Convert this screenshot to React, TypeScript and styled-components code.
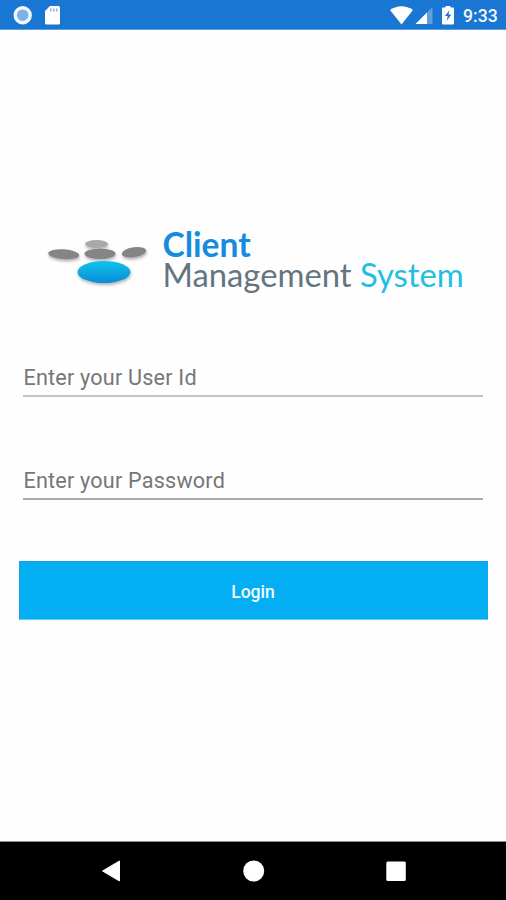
import React, { useState } from "react";
import styled, { createGlobalStyle } from "styled-components";

const GlobalStyle = createGlobalStyle`
  *, *::before, *::after { box-sizing: border-box; }
  body { margin: 0; background: #fefefe; font-family: Roboto, "Liberation Sans", sans-serif; }
`;

const Screen = styled.div`
  display: flex;
  flex-direction: column;
  width: 100%;
  height: 100vh;
  min-height: 640px;
  overflow: hidden;
  background: #fefefe;
`;

const StatusBar = styled.header`
  display: flex;
  align-items: center;
  justify-content: space-between;
  flex: none;
  height: 30px;
  background: #1976d2;
  border-bottom: 1px solid #5c9fe0;
`;

const StatusGroup = styled.div`
  display: flex;
  align-items: center;
`;

const Clock = styled.time`
  width: 34px;
  margin: 3px 9px 0 0;
  color: #f4f9ff;
  font-size: 17.6px;
  font-weight: 500;
  line-height: 22px;
  white-space: nowrap;
`;

const Icon = styled.svg`
  display: block;
  flex: none;
`;

const Content = styled.main`
  display: flex;
  flex-direction: column;
  flex: 1;
  padding: 198px 18px 0 19px;
`;

const Brand = styled.div`
  display: flex;
  height: 76px;
  padding-left: 23px;
`;

const BrandName = styled.h1`
  margin: 0 0 0 10.5px;
  padding-top: 1px;
  font-family: Lato, "Liberation Sans", sans-serif;
  font-weight: 400;
  white-space: nowrap;
`;

const BrandLine = styled.span<{ $color: string; $size: string; $weight?: number }>`
  display: block;
  color: ${(p) => p.$color};
  font-size: ${(p) => p.$size};
  font-weight: ${(p) => p.$weight ?? 400};
  line-height: 30px;

  & + & {
    margin-top: 1px;
  }
`;

const BrandAccent = styled.span`
  color: #22bfe0;
`;

const Form = styled.form`
  display: flex;
  flex-direction: column;
  padding-top: 57px;
`;

const Field = styled.label<{ $line: string }>`
  position: relative;
  display: block;
  height: 36px;
  margin: 0 5px 0 4px;
  padding: 4px 0 0 0.5px;
  border-bottom: 2px solid ${(p) => p.$line};

  & + & {
    margin-top: 67px;
  }
`;

const Hint = styled.span<{ $hidden: boolean }>`
  visibility: ${(p) => (p.$hidden ? "hidden" : "visible")};
  color: #777;
  font-size: 21.6px;
  line-height: 26px;
  letter-spacing: 0.2px;
  white-space: nowrap;
`;

const Input = styled.input`
  position: absolute;
  inset: 0;
  width: 100%;
  padding: 0;
  border: 0;
  outline: 0;
  background: transparent;
  color: #333;
  font: 400 21.6px Roboto, sans-serif;
`;

const LoginButton = styled.button`
  height: 59px;
  margin-top: 61px;
  padding: 2px 1px 0 0;
  border: 1px solid #18a2e8;
  border-bottom-color: #67cdf7;
  background: #03aef3;
  color: #f3fbff;
  font: 500 17.6px Roboto, sans-serif;
`;

const NavBar = styled.nav`
  display: flex;
  justify-content: space-between;
  align-items: center;
  flex: none;
  height: 59px;
  padding: 0 98px 0 99px;
  border-top: 1px solid #8d8d8d;
  background: #000;
`;

const NavButton = styled.button`
  display: flex;
  padding: 0;
  border: 0;
  background: none;
`;

function TextField({ hint, type, line }: { hint: string; type: string; line: string }) {
  const [value, setValue] = useState("");
  return (
    <Field $line={line}>
      <Hint $hidden={value !== ""}>{hint}</Hint>
      <Input type={type} value={value} onChange={(e) => setValue(e.target.value)} />
    </Field>
  );
}

const NotificationIcons = () => (
  <Icon width="70" height="29" viewBox="0 0 70 29">
    <circle cx="22.7" cy="15.2" r="6.2" fill="#7db0e8" />
    <circle cx="22.7" cy="15.2" r="7.5" fill="none" stroke="#f3f8ff" strokeWidth="3.4" />
    <path
      d="M50 6h8.500a1.500 1.500 0 0 1 1.500 1.500v15.500a1.500 1.500 0 0 1-1.500 1.500h-12a1.500 1.500 0 0 1-1.500-1.500v-12z"
      fill="#fff"
    />
    <path d="M50 8.500h1.700v3H50zM53 8.500h1.700v3H53zM56 8.500h1.500v3H56z" fill="#8fb9e8" />
  </Icon>
);

const SystemIcons = () => (
  <Icon width="87" height="29" viewBox="376 0 87 29">
    <path d="M390 10Q401.500 2.500 413 10L401.500 24.500z" fill="#fff" />
    <path d="M432.500 7v17H415.500z" fill="#5f9fe3" />
    <path d="M427 12.500V24H415.500z" fill="#fff" />
    <path
      d="M445.500 7.500V6h5v1.500h2.500q1 0 1 1v15q0 1-1 1h-10q-1 0-1-1v-15q0-1 1-1z"
      fill="#fff"
    />
    <path d="M449.500 10l-4.500 6h2.700l-1 5 4.600-6.500h-2.800z" fill="#1976d2" />
  </Icon>
);

const BrandMark = () => (
  <Icon width="110" height="76" viewBox="42 228 110 76">
    <defs>
      <linearGradient id="blue" x1="0" y1="0" x2="0" y2="1">
        <stop offset="0" stopColor="#10c4ec" />
        <stop offset="1" stopColor="#078bd7" />
      </linearGradient>
      <filter id="shade" x="-20%" y="-30%" width="140%" height="180%">
        <feDropShadow dx="0.500" dy="2" stdDeviation="1.500" floodOpacity="0.300" />
      </filter>
    </defs>
    <g filter="url(#shade)">
      <ellipse cx="96.500" cy="244" rx="11.500" ry="4" fill="#a9a9a9" />
      <ellipse cx="63.700" cy="254.300" rx="15.500" ry="5" fill="#858585" transform="rotate(4 63.700 254.300)" />
      <ellipse cx="100" cy="253.800" rx="15.500" ry="5.200" fill="#858585" />
      <ellipse cx="134" cy="252.300" rx="12.300" ry="5" fill="#858585" transform="rotate(-8 134 252.300)" />
      <ellipse cx="104" cy="272" rx="26.500" ry="11" fill="url(#blue)" />
    </g>
  </Icon>
);

export default function App() {
  return (
    <Screen>
      <GlobalStyle />
      <StatusBar>
        <NotificationIcons />
        <StatusGroup>
          <SystemIcons />
          <Clock>9:33</Clock>
        </StatusGroup>
      </StatusBar>
      <Content>
        <Brand>
          <BrandMark />
          <BrandName>
            <BrandLine $color="#158ce0" $size="33.6px" $weight={700}>Client</BrandLine>
            <BrandLine $color="#64757f" $size="32.8px">
              Management <BrandAccent>System</BrandAccent>
            </BrandLine>
          </BrandName>
        </Brand>
        <Form onSubmit={(e) => e.preventDefault()}>
          <TextField hint="Enter your User Id" type="text" line="#c4c4c4" />
          <TextField hint="Enter your Password" type="password" line="#aaa" />
          <LoginButton>Login</LoginButton>
        </Form>
      </Content>
      <NavBar>
        <NavButton aria-label="Back">
          <Icon width="24" height="24" viewBox="0 0 24 24">
            <path d="M3.500 12L20.500 2V22z" fill="#fff" stroke="#fff" strokeLinejoin="round" />
          </Icon>
        </NavButton>
        <NavButton aria-label="Home">
          <Icon width="24" height="24" viewBox="0 0 24 24">
            <circle cx="11.700" cy="12" r="10.500" fill="#fff" />
          </Icon>
        </NavButton>
        <NavButton aria-label="Recent apps">
          <Icon width="24" height="24" viewBox="0 0 24 24">
            <rect x="2.300" y="2.500" width="19.500" height="19.500" rx="1.500" fill="#fff" />
          </Icon>
        </NavButton>
      </NavBar>
    </Screen>
  );
}
